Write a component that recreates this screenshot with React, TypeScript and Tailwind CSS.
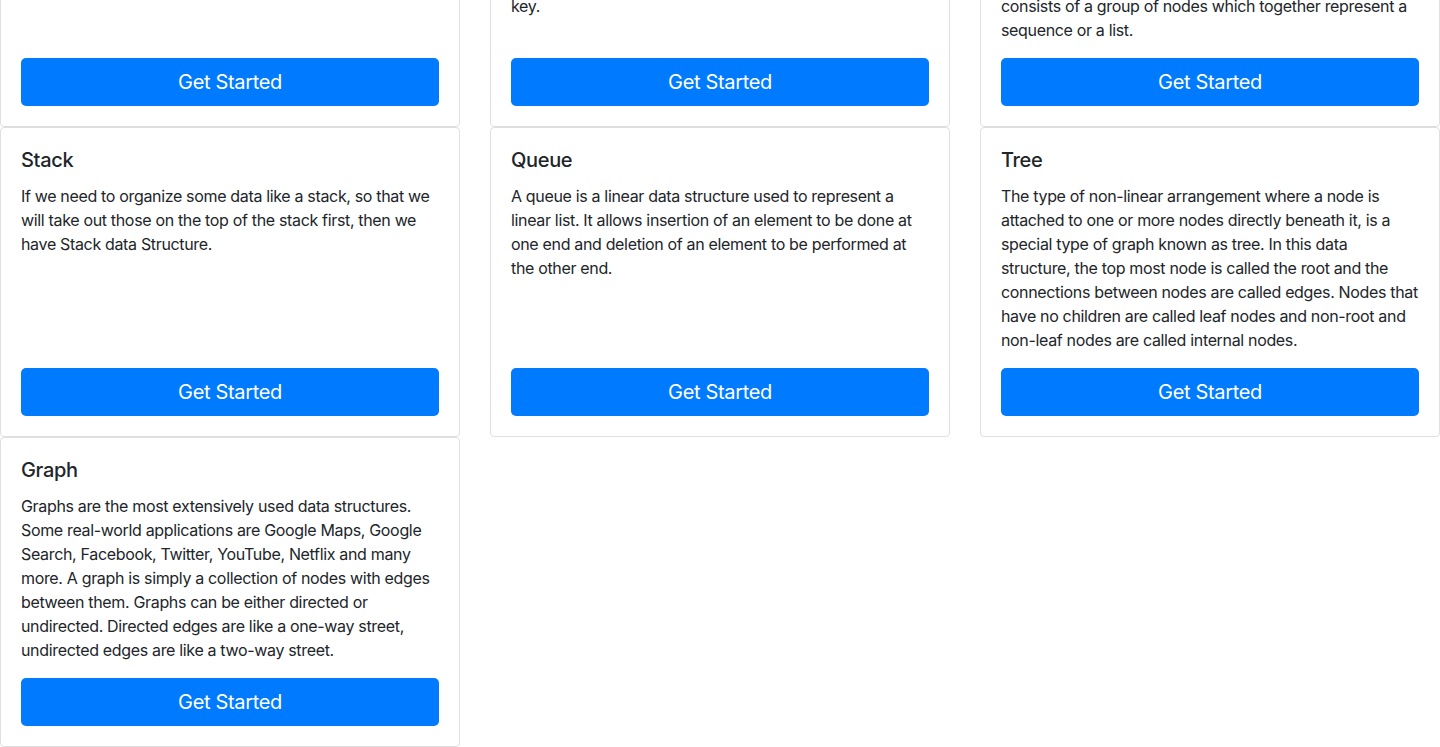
import React from "react";

// ─── Data structure cards ───────────────────────────────────────────
// Three-column grid of topic cards, each with a full-width CTA pinned
// to the bottom. The page is shown scrolled, so the first row is cut.
// ────────────────────────────────────────────────────────────────────

type Topic = { title: string; body: string };

// "\n" marks where the original copy wrapped (body uses pre-line)
const firstRow: Topic[] = [
  {
    title: "Array",
    body: "An array is a collection of items stored at contiguous memory locations. The idea is to store multiple items of the same type together.",
  },
  {
    title: "Hash Table",
    body: "Hashing is an important data structure designed to use a special function called the hash function, which is used to map a given value with a particular\nkey.",
  },
  {
    title: "Linked List",
    body: "A linked list is a linear data structure, in which the elements are not stored at contiguous memory locations. It\nconsists of a group of nodes which together represent a sequence or a list.",
  },
];

const rows: Topic[][] = [
  [
    {
      title: "Stack",
      body: "If we need to organize some data like a stack, so that we will take out those on the top of the stack first, then we have Stack data Structure.",
    },
    {
      title: "Queue",
      body: "A queue is a linear data structure used to represent a linear list. It allows insertion of an element to be done at one end and deletion of an element to be performed at the other end.",
    },
    {
      title: "Tree",
      body: "The type of non-linear arrangement where a node is attached to one or more nodes directly beneath it, is a special type of graph known as tree. In this data structure, the top most node is called the root and the connections between nodes are called edges. Nodes that have no children are called leaf nodes and non-root and non-leaf nodes are called internal nodes.",
    },
  ],
  [
    {
      title: "Graph",
      body: "Graphs are the most extensively used data structures. Some real-world applications are Google Maps, Google Search, Facebook, Twitter, YouTube, Netflix and many more. A graph is simply a collection of nodes with edges between them. Graphs can be either directed or undirected. Directed edges are like a one-way street, undirected edges are like a two-way street.",
    },
  ],
];

function TopicCard({ topic }: { topic: Topic }) {
  return (
    <div className="flex h-full flex-col rounded-[4px] border border-[#dfdfdf] bg-white p-5">
      <h5 className="mb-3 text-[20px] font-medium leading-[24px] text-[#212529]">
        {topic.title}
      </h5>
      <p className="whitespace-pre-line text-[16px] leading-[24px] text-[#212529]">
        {topic.body}
      </p>
      <div className="mt-auto pt-4">
        <button
          type="button"
          className="block h-12 w-full rounded-[5px] bg-[#007bff] px-4 text-[20px] leading-[30px] text-white"
        >
          Get Started
        </button>
      </div>
    </div>
  );
}

function Row({ items }: { items: Topic[] }) {
  return (
    <div className="grid grid-cols-3 gap-x-[30px]">
      {items.map((t) => (
        <TopicCard key={t.title} topic={t} />
      ))}
    </div>
  );
}

export default function App() {
  return (
    <div
      className="w-[1440px] bg-white tracking-[-0.021em] text-[#212529]"
      style={{ fontFamily: "Inter, 'Noto Sans', sans-serif" }}
    >
      {/* first row is scrolled past, only its lower part shows */}
      <div className="flex h-[127px] flex-col justify-end overflow-hidden">
        <Row items={firstRow} />
      </div>
      {rows.map((r, i) => (
        <Row key={i} items={r} />
      ))}
    </div>
  );
}
